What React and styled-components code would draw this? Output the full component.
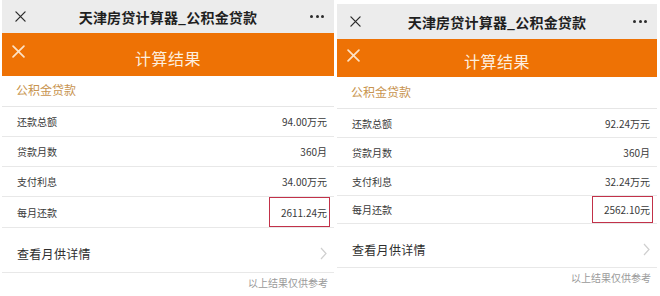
import React from 'react'
import styled, { createGlobalStyle } from 'styled-components'

const GlobalStyle = createGlobalStyle`
  html, body {
    margin: 0;
    padding: 0;
    background: #fff;
  }
  body {
    width: 660px;
    height: 296px;
    overflow: hidden;
    font-family: "Noto Sans CJK SC", "Liberation Sans", sans-serif;
    color: #333;
  }
`

const panels = [
  {
    key: 'a',
    width: 332,
    left: 2,
    top: 0,
    topBar: 33,
    resultBar: 43,
    section: 31,
    row: 30,
    lastRow: 31,
    detail: 45,
    total: '94.00万元',
    months: '360月',
    interest: '34.00万元',
    monthly: '2611.24元',
  },
  {
    key: 'b',
    width: 320,
    left: 3,
    top: 4,
    topBar: 35,
    resultBar: 38,
    section: 32,
    row: 29,
    lastRow: 28,
    detail: 44,
    total: '92.24万元',
    months: '360月',
    interest: '32.24万元',
    monthly: '2562.10元',
  },
]

function Cross({ size, color, weight }) {
  return (
    <svg width={size} height={size} viewBox="0 0 12 12">
      <path d="M1 1 L11 11 M11 1 L1 11" stroke={color} strokeWidth={weight} strokeLinecap="round" />
    </svg>
  )
}

function Chevron() {
  return (
    <svg width="7" height="13" viewBox="0 0 7 13">
      <path d="M1 1 L6 6.5 L1 12" fill="none" stroke="#cfcfcf" strokeWidth="1.2" />
    </svg>
  )
}

function Panel({ p }) {
  return (
    <Screen $width={p.width} $left={p.left} $top={p.top}>
      <TopBar $h={p.topBar}>
        <Cross size={11} color="#2b2b2b" weight={1.4} />
        <PageTitle>天津房贷计算器_公积金贷款</PageTitle>
        <Dots>
          <i />
          <i />
          <i />
        </Dots>
      </TopBar>
      <ResultBar $h={p.resultBar}>
        <ResultClose>
          <Cross size={13} color="#fde2c6" weight={1.6} />
        </ResultClose>
        <ResultTitle>计算结果</ResultTitle>
      </ResultBar>
      <SectionTitle $h={p.section}>公积金贷款</SectionTitle>
      <Row $h={p.row}>
        <Label>还款总额</Label>
        <Value>{p.total}</Value>
      </Row>
      <Row $h={p.row}>
        <Label>贷款月数</Label>
        <Value>{p.months}</Value>
      </Row>
      <Row $h={p.row}>
        <Label>支付利息</Label>
        <Value>{p.interest}</Value>
      </Row>
      <Row $h={p.lastRow}>
        <Label>每月还款</Label>
        <Marked>{p.monthly}</Marked>
      </Row>
      <DetailRow $h={p.detail}>
        <DetailLabel>查看月供详情</DetailLabel>
        <Chevron />
      </DetailRow>
      <Note>以上结果仅供参考</Note>
    </Screen>
  )
}

export default function App() {
  return (
    <>
      <GlobalStyle />
      <Page>
        {panels.map(p => (
          <Panel key={p.key} p={p} />
        ))}
      </Page>
    </>
  )
}

const Page = styled.div`
  display: flex;
  align-items: flex-start;
  width: 660px;
  height: 296px;
`

const Screen = styled.div`
  width: ${props => props.$width}px;
  margin-left: ${props => props.$left}px;
  margin-top: ${props => props.$top}px;
  display: flex;
  flex-direction: column;
  background: #fff;
`

const TopBar = styled.div`
  height: ${props => props.$h}px;
  background: #ececec;
  display: flex;
  align-items: center;
  padding: 0 10px 0 13px;
  box-sizing: border-box;
`

const PageTitle = styled.div`
  flex: 1;
  text-align: center;
  font-size: 14px;
  font-weight: 600;
  color: #1f1f1f;
  letter-spacing: 0.2px;
`

const Dots = styled.div`
  display: flex;
  gap: 2.5px;
  i {
    width: 3px;
    height: 3px;
    border-radius: 50%;
    background: #2b2b2b;
  }
`

const ResultBar = styled.div`
  height: ${props => props.$h}px;
  background: #ee7205;
  display: flex;
  align-items: center;
  position: relative;
  justify-content: center;
`

const ResultClose = styled.div`
  position: absolute;
  left: 10px;
  top: 0;
  bottom: 6px;
  display: flex;
  align-items: center;
`

const ResultTitle = styled.div`
  font-size: 16px;
  color: #fdeede;
  padding-top: 6px;
  letter-spacing: 0.5px;
`

const SectionTitle = styled.div`
  height: ${props => props.$h}px;
  display: flex;
  align-items: center;
  padding: 0 0 3px 14px;
  box-sizing: border-box;
  font-size: 12px;
  color: #c8944f;
  border-bottom: 1px solid #e6e6e6;
`

const Row = styled.div`
  height: ${props => props.$h}px;
  display: flex;
  align-items: center;
  justify-content: space-between;
  padding: 0 4px 0 15px;
  box-sizing: border-box;
  border-bottom: 1px solid #e8e8e8;
  font-size: 10px;
  color: #3a3a3a;
`

const Label = styled.span``

const Value = styled.span`
  padding-right: 3px;
`

const Marked = styled.span`
  height: 100%;
  width: 61px;
  box-sizing: border-box;
  display: flex;
  align-items: center;
  justify-content: flex-end;
  padding-right: 2px;
  border: 1.5px solid #c23149;
`

const DetailRow = styled.div`
  height: ${props => props.$h}px;
  display: flex;
  align-items: center;
  justify-content: space-between;
  padding: 7px 7px 0 15px;
  box-sizing: border-box;
  border-bottom: 1px solid #e8e8e8;
`

const DetailLabel = styled.span`
  font-size: 12px;
  color: #2e2e2e;
  letter-spacing: 0.3px;
`

const Note = styled.div`
  text-align: right;
  padding: 2px 6px 0 0;
  font-size: 10px;
  color: #9a9a9a;
`
